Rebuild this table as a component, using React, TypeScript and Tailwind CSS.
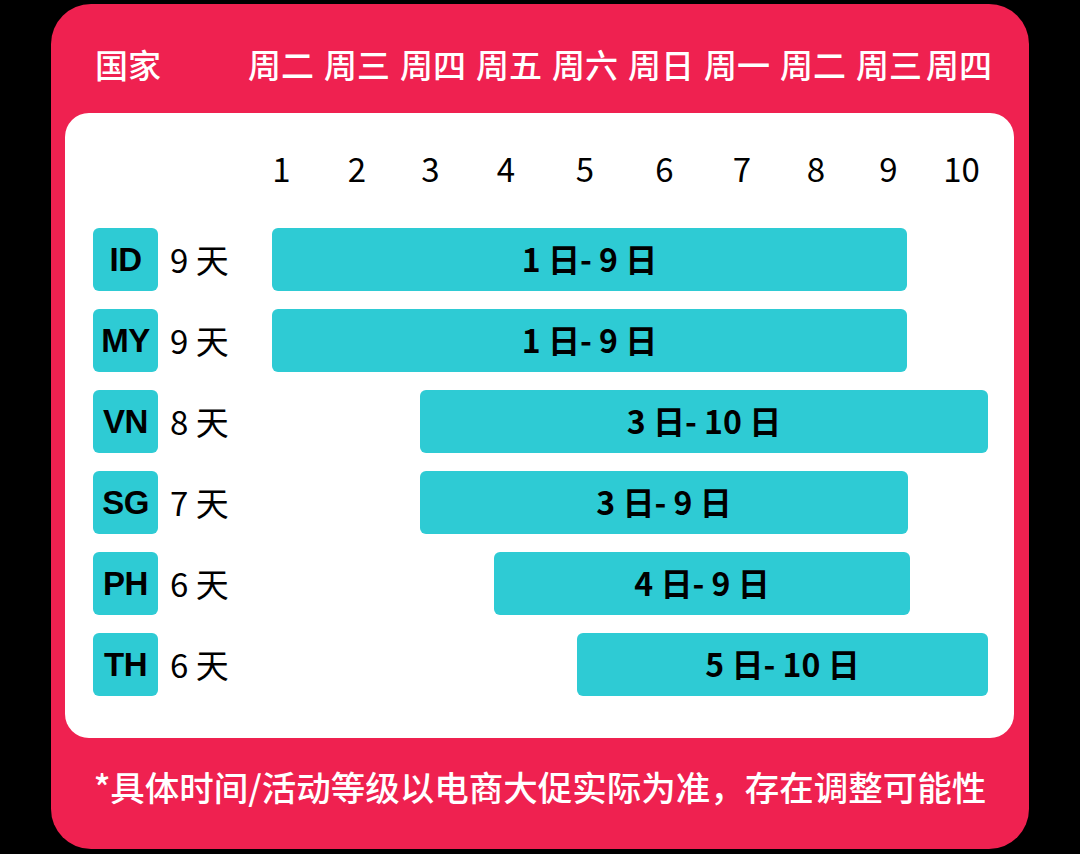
const weekdays = ["周二", "周三", "周四", "周五", "周六", "周日", "周一", "周二", "周三"];

// column cells for the day numbers (widths follow the picture's uneven spacing)
const dayCells: { label: string; cls: string }[] = [
    { label: "1", cls: "w-[77px]" },
    { label: "2", cls: "w-[74px]" },
    { label: "3", cls: "w-[73px]" },
    { label: "4", cls: "w-[78px]" },
    { label: "5", cls: "w-[80px]" },
    { label: "6", cls: "w-[79px]" },
    { label: "7", cls: "w-[76px]" },
    { label: "8", cls: "w-[72px]" },
    { label: "9", cls: "w-[73px]" },
    { label: "10", cls: "w-[73px]" },
];

type rowType = {
    code: string;
    days: string;
    range: string;
    bar: string;
};

const rows: rowType[] = [
    { code: "ID", days: "9 天", range: "1 日- 9 日", bar: "ml-0 w-[635px]" },
    { code: "MY", days: "9 天", range: "1 日- 9 日", bar: "ml-0 w-[635px]" },
    { code: "VN", days: "8 天", range: "3 日- 10 日", bar: "ml-[148px] w-[568px]" },
    { code: "SG", days: "7 天", range: "3 日- 9 日", bar: "ml-[148px] w-[488px]" },
    { code: "PH", days: "6 天", range: "4 日- 9 日", bar: "ml-[222px] w-[416px]" },
    { code: "TH", days: "6 天", range: "5 日- 10 日", bar: "ml-[305px] w-[411px]" },
];

const cjk = "font-['Noto_Sans_CJK_SC','Noto_Sans',sans-serif]";

function Row({ row }: { row: rowType }) {
    return <div className="flex flex-row items-center h-[63px]">
        <div className="ml-[28px] w-[65px] h-[63px] shrink-0 rounded-md bg-[#2ecbd4] flex items-center justify-center">
            <span className="font-['Liberation_Sans',Arial,sans-serif] font-bold text-[33px] leading-none text-black tracking-[-0.5px]">{row.code}</span>
        </div>

        <span className={`${cjk} ml-[12px] w-[102px] shrink-0 text-[33px] leading-none text-black whitespace-nowrap`}>{row.days}</span>

        <div className={`${row.bar} h-[63px] shrink-0 rounded-md bg-[#2ecbd4] flex items-center justify-center pb-[3px]`}>
            <span className={`${cjk} font-bold text-[32px] leading-none text-black whitespace-pre`}>{row.range}</span>
        </div>
    </div>
};

export default function App() {
    return <div className="w-[1080px] h-[854px] bg-black pt-[4px] pl-[51px]">
        <div className="w-[978px] h-[845px] rounded-[40px] bg-[#ef2150] flex flex-col">
            <header className={`${cjk} flex flex-row items-center pt-[38px] pl-[44px] h-[82px] text-white text-[33px] leading-[44px] font-medium`}>
                <span className="w-[153px]">国家</span>

                <div className="flex flex-row gap-[11px]">
                    {weekdays.map((d, i) => <span key={i} className="w-[65px] text-center whitespace-nowrap">{d}</span>)}
                </div>

                <span className="ml-[5px] w-[66px] whitespace-nowrap">周四</span>
            </header>

            <section className="ml-[14px] mt-[27px] w-[949px] h-[625px] rounded-[24px] bg-white flex flex-col">
                <div className={`${cjk} flex flex-row pt-[35px] pl-[178px] h-[77px] text-[33px] leading-[40px] text-black`}>
                    {dayCells.map(c => <span key={c.label} className={`${c.cls} text-center`}>{c.label}</span>)}
                </div>

                <div className="flex flex-col gap-[18px] mt-[38px]">
                    {rows.map(r => <Row key={r.code} row={r} />)}
                </div>
            </section>

            <footer className={`${cjk} mt-[28px] text-center text-white text-[34.5px] leading-[40px] font-medium whitespace-nowrap`}>
                *具体时间/活动等级以电商大促实际为准，存在调整可能性
            </footer>
        </div>
    </div>
};
